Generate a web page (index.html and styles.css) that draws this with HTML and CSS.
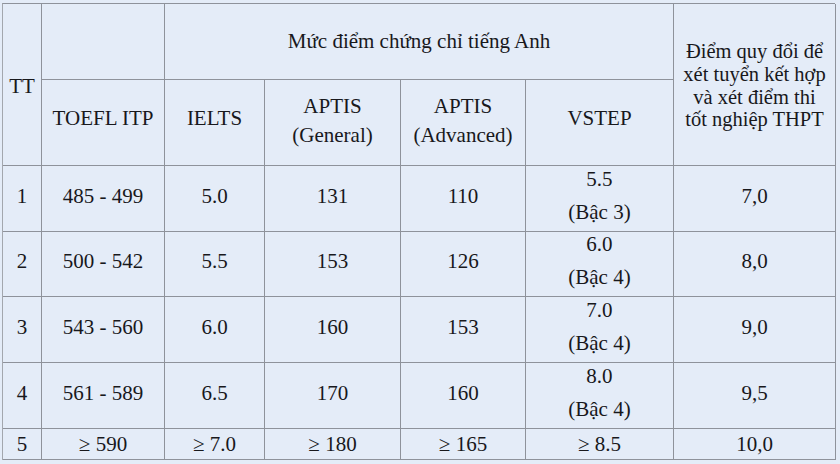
FILE: index.html
```html
<!DOCTYPE html>
<html lang="vi">
<head>
<meta charset="utf-8">
<title>Bảng quy đổi điểm chứng chỉ tiếng Anh</title>
<link rel="stylesheet" href="styles.css">
</head>
<body>
<div class="table">
  <div class="c tt">TT</div>
  <div class="c empty"></div>
  <div class="c group">Mức điểm chứng chỉ tiếng Anh</div>
  <div class="c conv">Điểm quy đổi để<br>xét tuyển kết hợp<br>và xét điểm thi<br>tốt nghiệp THPT</div>

  <div class="c h">TOEFL ITP</div>
  <div class="c h">IELTS</div>
  <div class="c h h2">APTIS<br>(General)</div>
  <div class="c h h2">APTIS<br>(Advanced)</div>
  <div class="c h">VSTEP</div>

  <div class="c r1">1</div><div class="c r1">485 - 499</div><div class="c r1">5.0</div><div class="c r1">131</div><div class="c r1">110</div><div class="c r1 two">5.5<br>(Bậc 3)</div><div class="c r1">7,0</div>
  <div class="c r2">2</div><div class="c r2">500 - 542</div><div class="c r2">5.5</div><div class="c r2">153</div><div class="c r2">126</div><div class="c r2 two">6.0<br>(Bậc 4)</div><div class="c r2">8,0</div>
  <div class="c r3">3</div><div class="c r3">543 - 560</div><div class="c r3">6.0</div><div class="c r3">160</div><div class="c r3">153</div><div class="c r3 two">7.0<br>(Bậc 4)</div><div class="c r3">9,0</div>
  <div class="c r4">4</div><div class="c r4">561 - 589</div><div class="c r4">6.5</div><div class="c r4">170</div><div class="c r4">160</div><div class="c r4 two">8.0<br>(Bậc 4)</div><div class="c r4">9,5</div>
  <div class="c r5">5</div><div class="c r5">≥ 590</div><div class="c r5">≥ 7.0</div><div class="c r5">≥ 180</div><div class="c r5">≥ 165</div><div class="c r5">≥ 8.5</div><div class="c r5">10,0</div>
</div>
</body>
</html>
```
FILE: styles.css
```css
html, body {
  margin: 0;
  padding: 0;
  background: #e4ecf8;
}
body {
  width: 840px;
  height: 464px;
  overflow: hidden;
  font-family: "Liberation Serif", "Times New Roman", serif;
  font-size: 21px;
  color: #18181c;
}
.table {
  box-sizing: border-box;
  margin: 3px 0 0 2px;
  width: 833px;
  display: grid;
  grid-template-columns: 39px 123px 100px 136px 125px 148px 162px;
  grid-template-rows: 76px 86px 66px 65px 66px 66px 31px;
  border-top: 1px solid #8e929b;
  border-left: 1px solid #a3a7ae;
}
.c {
  box-sizing: border-box;
  border-right: 1px solid #8e929b;
  border-bottom: 1px solid #8e929b;
  display: flex;
  align-items: center;
  justify-content: center;
  text-align: center;
  line-height: 24px;
}
.tt { grid-row: 1 / 3; grid-column: 1; padding-top: 2px; }
.empty { grid-row: 1; grid-column: 2; }
.group { grid-row: 1; grid-column: 3 / 7; padding-bottom: 2px; }
.conv {
  grid-row: 1 / 3;
  grid-column: 7;
  font-size: 20.5px;
  line-height: 22.8px;
  padding-top: 2px;
}
.h { padding-bottom: 9px; }
.h2 { line-height: 29px; padding-bottom: 4px; }
.two { line-height: 33px; padding-bottom: 4px; }
.r1, .r2, .r3, .r4 { padding-bottom: 6px; }
.r5 { padding-bottom: 1px; }
```
